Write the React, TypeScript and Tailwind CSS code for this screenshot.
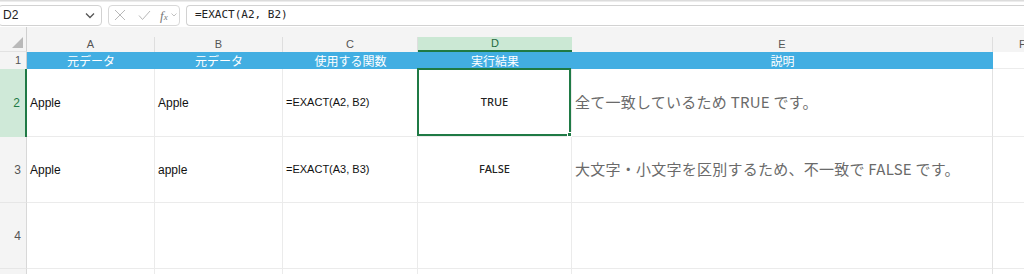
const cols = 'grid grid-cols-[27px_128px_128px_135px_154px_421px_1fr]';
const cellFont = { fontFamily: '"Liberation Sans", "Noto Sans CJK JP", sans-serif' };
const jpFont = { fontFamily: '"Noto Sans CJK JP", "Noto Sans", sans-serif' };

const letters = ['A', 'B', 'C', 'D', 'E', 'F'];
const heads = ['元データ', '元データ', '使用する関数', '実行結果', '説明'];

type Row = {
  n: number;
  h: string;
  a: string;
  b: string;
  c: string;
  d: string;
  e: string;
  selected?: boolean;
  hideNum?: boolean;
};

const rows: Row[] = [
  { n: 2, h: 'h-[68px]', a: 'Apple', b: 'Apple', c: '=EXACT(A2, B2)', d: 'TRUE', e: '全て一致しているため TRUE です。', selected: true },
  { n: 3, h: 'h-[66px]', a: 'Apple', b: 'apple', c: '=EXACT(A3, B3)', d: 'FALSE', e: '大文字・小文字を区別するため、不一致で FALSE です。' },
  { n: 4, h: 'h-[66px]', a: '', b: '', c: '', d: '', e: '' },
  { n: 5, h: 'h-[66px]', a: '', b: '', c: '', d: '', e: '', hideNum: true },
];

function FormulaBar() {
  return (
    <div className="h-[27px] bg-white relative">
      <div className="h-[2px] bg-[#dcdcdc] border-b border-[#ececec]" />
      <div className="flex items-center h-[22px] mt-[2px]">
        <div className="w-[104px] -ml-[2px] h-[21px] border border-[#d2d2d2] rounded-[4px] flex items-center justify-between pl-[4px] pr-[6px]">
          <span className="text-[12px] text-[#222]" style={cellFont}>D2</span>
          <svg width="10" height="7" viewBox="0 0 10 7">
            <path d="M1 1.5 L5 5.5 L9 1.5" stroke="#555" strokeWidth="1.3" fill="none" />
          </svg>
        </div>
        <div className="ml-[6px] w-[72px] h-[21px] border border-[#d8d8d8] rounded-[4px] flex items-center pl-[5px] gap-[12px]">
          <svg width="12" height="12" viewBox="0 0 12 12">
            <path d="M1 1 L11 11 M11 1 L1 11" stroke="#b8b8b8" strokeWidth="1" fill="none" />
          </svg>
          <svg width="13" height="11" viewBox="0 0 13 11">
            <path d="M1 5.5 L4.5 9.5 L12 1" stroke="#b8b8b8" strokeWidth="1" fill="none" />
          </svg>
          <div className="flex items-center gap-[3px] -ml-[3px]">
            <span className="text-[13px] italic text-[#777] leading-none" style={{ fontFamily: '"Liberation Serif", serif' }}>
              f<span className="text-[9px]">x</span>
            </span>
            <svg width="6" height="4" viewBox="0 0 6 4">
              <path d="M0.5 0.5 L3 3 L5.5 0.5" stroke="#bbb" strokeWidth="0.9" fill="none" />
            </svg>
          </div>
        </div>
        <div className="ml-[6px] flex-1 h-[21px] border border-[#d2d2d2] border-r-0 rounded-l-[4px] flex items-center pl-[8px]">
          <span className="text-[11px] text-[#222]" style={{ fontFamily: '"DejaVu Sans Mono", monospace' }}>=EXACT(A2, B2)</span>
        </div>
      </div>
    </div>
  );
}

function ColumnHeader() {
  return (
    <div className={`${cols} h-[25px] bg-[#f4f4f4]`}>
      <div className="border-r border-[#cfcfcf] border-b border-b-[#e2e2e2] relative">
        <svg className="absolute right-[3px] bottom-[3px]" width="11" height="11" viewBox="0 0 11 11">
          <path d="M11 0 L11 11 L0 11 Z" fill="#b9b9b9" />
        </svg>
      </div>
      {letters.map((l, i) => (
        <div key={l} className="flex flex-col justify-end">
          <div
            className={
              l === 'D'
                ? 'h-[15px] bg-[#cbe8d4] border-b-2 border-[#1f7a45] flex items-center justify-center text-[11px] text-[#1f6b3d]'
                : `h-[15px] border-r border-[#dedede] ${i === 4 ? 'border-[#cfcfcf]' : ''} flex items-center justify-center text-[11px] text-[#555]`
            }
            style={cellFont}
          >
            {l === 'F' ? <span className="w-full pl-[26px]">F</span> : l}
          </div>
        </div>
      ))}
    </div>
  );
}

function HeaderRow() {
  return (
    <div className={`${cols} h-[17px]`}>
      <div className="bg-[#f4f4f4] border-r border-[#cfcfcf] flex items-center justify-end pr-[5px] text-[11px] text-[#555]" style={cellFont}>
        1
      </div>
      {heads.map((t, i) => (
        <div key={i} className="bg-[#42aee2] flex items-center justify-center text-[12px] text-white leading-none" style={jpFont}>
          {t}
        </div>
      ))}
      <div className="bg-white border-b border-[#ececec]" />
    </div>
  );
}

function DataRow({ r }: { r: Row }) {
  const cell = 'border-r border-b border-[#ebebeb] flex items-center';
  return (
    <div className={`${cols} ${r.h}`}>
      <div
        className={
          r.selected
            ? 'bg-[#cfe9d8] border-r-2 border-[#1f7a45] flex items-center justify-end pr-[5px] text-[12px] text-[#1f7a45]'
            : 'bg-[#f4f4f4] border-r border-b border-[#d8d8d8] border-b-[#e6e6e6] flex items-center justify-end pr-[5px] text-[12px] text-[#555]'
        }
        style={cellFont}
      >
        {r.hideNum ? null : r.n}
      </div>
      <div className={`${cell} pl-[3px] text-[12px] text-[#111]`} style={cellFont}>{r.a}</div>
      <div className={`${cell} pl-[3px] text-[12px] text-[#111]`} style={cellFont}>{r.b}</div>
      <div className={`${cell} pl-[3px] text-[11px] text-[#111]`} style={cellFont}>{r.c}</div>
      <div className={`${cell} justify-center relative text-[11px] text-[#222] font-medium`} style={{ fontFamily: '"Noto Sans", sans-serif' }}>
        {r.d}
        {r.selected && (
          <div className="absolute -left-[1px] -top-[1px] right-0 bottom-0 border-2 border-[#1f7a45]">
            <div className="absolute -right-[3px] -bottom-[3px] w-[5px] h-[5px] bg-[#1f7a45] border border-white" />
          </div>
        )}
      </div>
      <div className={`${cell} pl-[3px] text-[15px] text-[#6a6a6a] tracking-[0.25px] border-r-[#e2e2e2]`} style={jpFont}>{r.e}</div>
      <div className="border-b border-[#ebebeb]" />
    </div>
  );
}

export default function App() {
  return (
    <div className="w-[1024px] h-[274px] overflow-hidden bg-white">
      <FormulaBar />
      <ColumnHeader />
      <HeaderRow />
      {rows.map((r) => (
        <DataRow key={r.n} r={r} />
      ))}
    </div>
  );
}
